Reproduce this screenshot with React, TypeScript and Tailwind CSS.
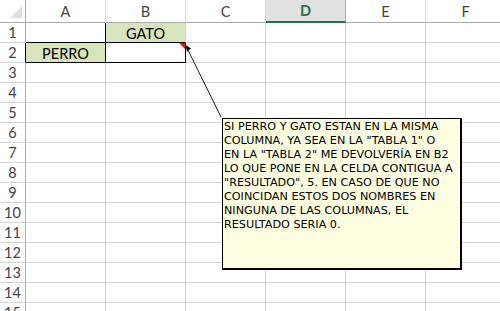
const COLS = ['A', 'B', 'C', 'D', 'E', 'F'];
const ROWS = Array.from({ length: 15 }, (_, i) => i + 1);

const cellFont = { fontFamily: 'Lato, "Liberation Sans", sans-serif' };

function bodyCell(row: number, col: string) {
  // selection frame around A2, B1, B2 is drawn with black edges
  let cls = 'border-r border-b border-r-[#d4d4d4] border-b-[#d4d4d4]';
  let text = '';
  if (row === 1 && col === 'A') cls = 'border-r border-b border-r-black border-b-black';
  if (row === 1 && col === 'B') {
    cls = 'border-r border-b border-r-[#d4d4d4] border-b-black bg-[#d8e4bc]';
    text = 'GATO';
  }
  if (row === 2 && col === 'A') {
    cls = 'border-r border-b border-r-black border-b-black bg-[#d8e4bc]';
    text = 'PERRO';
  }
  if (row === 2 && col === 'B') cls = 'relative border-r border-b border-r-black border-b-black';
  return (
    <div key={`${col}${row}`} className={`flex items-end justify-center pb-[1px] text-[14.5px] leading-none text-black ${cls}`}>
      {text}
      {row === 2 && col === 'B' && (
        <span className="absolute right-0 top-0 h-0 w-0 border-l-[6px] border-t-[6px] border-l-transparent border-t-[#e51400]" />
      )}
    </div>
  );
}

export default function App() {
  return (
    <div className="relative h-[311px] w-[500px] overflow-hidden bg-white" style={cellFont}>
      <div className="grid grid-cols-[26px_repeat(6,80px)] grid-rows-[23px_repeat(15,20px)]">
        <div className="relative border-r border-b border-r-[#ababab] border-b-[#ababab]">
          <span className="absolute bottom-[4px] right-[3px] h-0 w-0 border-b-[12px] border-l-[12px] border-b-[#dfdfdf] border-l-transparent" />
        </div>
        {COLS.map((c) =>
          c === 'D' ? (
            <div
              key={c}
              className="flex items-center justify-center border-r border-b-2 border-r-[#ababab] border-b-[#217346] bg-[#e1e1e1] pt-[1px] text-[14.5px] font-bold text-[#217346]"
            >
              {c}
            </div>
          ) : (
            <div
              key={c}
              className="flex items-center justify-center border-r border-b border-r-[#dadada] border-b-[#ababab] pt-[2px] text-[14.5px] text-[#444444]"
            >
              {c}
            </div>
          )
        )}
        {ROWS.map((r) => (
          <div key={r} className="contents">
            <div
              className={`flex items-end justify-center border-r border-b border-b-[#d4d4d4] pb-[2px] text-[14.5px] leading-none text-[#444444] ${
                r === 2 ? 'border-r-black' : 'border-r-[#ababab]'
              }`}
            >
              {r}
            </div>
            {COLS.map((c) => bodyCell(r, c))}
          </div>
        ))}
      </div>

      <svg className="pointer-events-none absolute left-0 top-0" width="500" height="311">
        <line x1="187" y1="48" x2="221" y2="117" stroke="#1a1a1a" strokeWidth="1" />
        <polygon points="185.5,45 191,48.5 187,51.5" fill="#000" />
      </svg>

      <div
        className="absolute left-[222px] top-[118px] h-[152px] w-[240px] border border-r-2 border-b-2 border-black bg-[#ffffe1] px-[1px] pt-[1px] text-[11.2px] leading-[14px] text-black"
        style={{ fontFamily: '"DejaVu Sans", Tahoma, sans-serif' }}
      >
        SI PERRO Y GATO ESTAN EN LA MISMA
        <br />
        COLUMNA, YA SEA EN LA "TABLA 1" O
        <br />
        EN LA "TABLA 2" ME DEVOLVERÍA EN B2
        <br />
        LO QUE PONE EN LA CELDA CONTIGUA A
        <br />
        "RESULTADO", 5. EN CASO DE QUE NO
        <br />
        COINCIDAN ESTOS DOS NOMBRES EN
        <br />
        NINGUNA DE LAS COLUMNAS, EL
        <br />
        RESULTADO SERIA 0.
      </div>
    </div>
  );
}
